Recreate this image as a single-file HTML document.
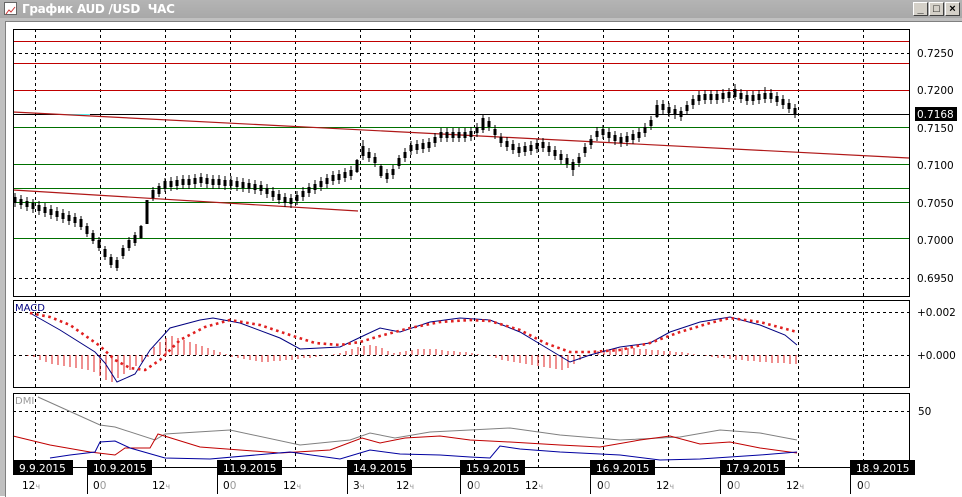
<!DOCTYPE html>
<html><head><meta charset="utf-8"><style>
html,body{margin:0;padding:0;width:962px;height:496px;overflow:hidden;background:#fff;font-family:"Liberation Sans","DejaVu Sans",sans-serif}
#tb{position:absolute;left:0;top:0;width:962px;height:18px;background:linear-gradient(#b4b4b4,#a8a8a8);}
#tt{position:absolute;left:22px;top:2px;color:#fff;font-weight:bold;font-size:12px;font-family:"DejaVu Sans",sans-serif;letter-spacing:-0.3px}
#ic{position:absolute;left:4px;top:2px;width:13px;height:13px;background:#fff;border:1px solid #666;box-sizing:border-box}
.bt{position:absolute;top:2px;width:15px;height:14px;background:#d4d0c8;border:1px solid;border-color:#fff #404040 #404040 #fff;box-sizing:border-box;font-size:11px;line-height:12px;text-align:center;color:#000;font-weight:bold}
#fr{position:absolute;left:0;top:18px;width:962px;height:478px;background:#c0c0c0}
#cl{position:absolute;left:5px;top:21px;width:957px;height:475px;background:#fff;border-left:1px solid #808080;border-top:1px solid #808080}
#s{position:absolute;left:0;top:0}
</style></head><body>
<div id="fr"></div><div id="cl"></div>
<div id="tb"><div id="ic"><svg width="11" height="11"><polyline points="1,9 4,5 6,7 10,2" fill="none" stroke="#c33" stroke-width="1"/></svg></div><div id="tt">График AUD /USD&nbsp; ЧАС</div>
<div class="bt" style="left:913px">_</div><div class="bt" style="left:929px">□</div><div class="bt" style="left:945px">×</div></div>
<svg id="s" width="962" height="496" font-family="DejaVu Sans, Liberation Sans, sans-serif" font-size="10.5">
<g stroke="#000" stroke-dasharray="3,3" shape-rendering="crispEdges">
<path d="M35.5 29V296M100.5 29V296M165.5 29V296M230.5 29V296M295.5 29V296M360.5 29V296M410.5 29V296M474.5 29V296M538.5 29V296M603.5 29V296M668.5 29V296M733.5 29V296M798.5 29V296M863.5 29V296"/>
<path d="M35.5 300V387M100.5 300V387M165.5 300V387M230.5 300V387M295.5 300V387M360.5 300V387M410.5 300V387M474.5 300V387M538.5 300V387M603.5 300V387M668.5 300V387M733.5 300V387M798.5 300V387M863.5 300V387"/>
<path d="M35.5 393V467M100.5 393V467M165.5 393V467M230.5 393V467M295.5 393V467M360.5 393V467M410.5 393V467M474.5 393V467M538.5 393V467M603.5 393V467M668.5 393V467M733.5 393V467M798.5 393V467M863.5 393V467"/>
<path d="M13 53.5H909M13 278.5H909M13 312.5H909M13 355.5H909M13 411.5H909"/>
</g>
<g shape-rendering="crispEdges">
<path d="M13 41.5H909M13 63.5H909M13 90.5H909" stroke="#c00000"/>
<path d="M13 127.5H909M13 164.5H909M13 188.5H909M13 202.5H909M13 238.5H909" stroke="#007000"/>
<path d="M13 114.5H909" stroke="#000"/>
<path d="M60 114.5H90" stroke="#5ee"/>
</g>
<line x1="13" y1="112" x2="909" y2="158" stroke="#b01818" stroke-width="1.2"/>
<line x1="13" y1="190" x2="358" y2="211" stroke="#b01818" stroke-width="1.2"/>
<path stroke="#000" stroke-width="1" fill="none" shape-rendering="crispEdges" d="M15 193V207M21 195V209M27 197V211M33 199V213M39 201V215M45 203V217M51 205V219M57 207V221M63 209V223M69 211V225M75 213V227M81 216V230M87 223V237M93 230V244M99 237V251M105 246V260M111 254V268M117 257V271M123 245V259M129 237V251M135 232V246M141 225V239M147 205V219M153 187V201M159 183V197M165 178V192M171 177V191M177 176V190M183 175V189M189 175V189M195 174V188M201 173V187M207 174V188M213 175V189M219 175V189M225 176V190M231 176V190M237 177V191M243 178V192M249 179V193M255 180V194M261 181V195M267 184V198M273 187V201M279 190V204M285 193V207M291 194V208M297 191V205M303 187V201M309 183V197M315 180V194M321 177V191M327 174V188M333 171V185M339 170V184M345 168V182M351 166V180M357 159V173M363 140V160M369 148V162M375 153V167M381 164V178M387 169V183M393 165V179M399 155V169M405 148V162M411 141V155M417 140V154M423 139V153M429 138V152M435 133V147M441 128V142M447 128V142M453 128V142M459 128V142M465 128V142M471 127V141M477 123V137M483 115V133M489 117V131M495 125V139M501 133V147M507 137V151M513 140V154M519 143V157M525 142V156M531 141V155M537 139V153M543 138V152M549 142V156M555 146V160M561 150V164M567 154V168M573 159V176M579 153V167M585 143V157M591 135V149M597 127V141M603 125V139M609 128V142M615 131V145M621 133V147M627 132V146M633 130V144M639 128V142M645 123V137M651 116V130M657 100V118M663 100V114M669 103V117M675 105V119M681 107V121M687 101V115M693 95V109M699 91V105M705 90V104M711 90V104M717 90V104M723 89V103M729 88V102M735 84V100M741 89V103M747 91V105M753 91V105M759 90V104M765 87V103M771 89V103M777 92V106M783 95V109M789 99V113M795 104V118"/>
<path stroke="#000" stroke-width="3" fill="none" d="M15 197V203M21 199V205M27 201V207M33 203V209M39 205V211M45 207V213M51 209V215M57 211V217M63 213V219M69 215V221M75 217V223M81 219V227M87 226V234M93 233V241M99 240V248M105 249V257M111 257V265M117 260V268M123 248V256M129 240V248M135 235V243M141 226V238M147 200V224M153 190V198M159 186V194M165 181V189M171 181V187M177 180V186M183 179V185M189 179V185M195 178V184M201 177V183M207 178V184M213 179V185M219 179V185M225 180V186M231 180V186M237 181V187M243 182V188M249 183V189M255 184V190M261 185V191M267 188V194M273 191V197M279 194V200M285 197V203M291 198V204M297 195V201M303 191V197M309 187V193M315 184V190M321 181V187M327 178V184M333 175V181M339 174V180M345 172V178M351 170V176M357 160V172M363 146V156M369 152V158M375 157V163M381 166V176M387 173V179M393 169V175M399 158V166M405 152V158M411 145V151M417 144V150M423 143V149M429 142V148M435 137V143M441 132V138M447 132V138M453 132V138M459 132V138M465 132V138M471 131V137M477 127V133M483 118V130M489 121V127M495 129V135M501 137V143M507 141V147M513 144V150M519 147V153M525 146V152M531 145V151M537 143V149M543 142V148M549 146V152M555 150V156M561 154V160M567 158V164M573 162V170M579 157V163M585 147V153M591 139V145M597 131V137M603 129V135M609 132V138M615 135V141M621 137V143M627 136V142M633 134V140M639 132V138M645 127V133M651 120V126M657 105V117M663 104V110M669 107V113M675 109V115M681 111V117M687 105V111M693 99V105M699 95V101M705 94V100M711 94V100M717 94V100M723 93V99M729 92V98M735 89V97M741 93V99M747 95V101M753 95V101M759 94V100M765 93V99M771 93V99M777 96V102M783 99V105M789 103V109M795 108V114"/>
<path stroke="#e02020" stroke-width="1" fill="none" shape-rendering="crispEdges" d="M28 355V356M34 355V357M40 355V360M46 355V362M52 355V364M58 355V365M64 355V366M70 355V367M76 355V368M82 355V369M88 355V370M94 355V372M100 355V376M106 355V380M112 355V382M118 355V378M124 355V374M130 355V370M136 355V366M142 355V362M148 355V357M154 355V347M160 355V342M166 355V338M172 355V336M178 355V338M184 355V340M190 355V342M196 355V344M202 355V346M208 355V348M214 355V350M220 355V352M226 355V354M232 355V357M238 355V358M244 355V359M250 355V360M256 355V361M262 355V362M268 355V362M274 355V361M280 355V361M286 355V360M292 355V360M298 355V359M304 355V358M310 355V358M316 355V357M322 355V356M328 355V355M334 355V354M340 355V353M346 355V351M352 355V349M358 355V347M364 355V346M370 355V345M376 355V346M382 355V348M388 355V351M394 355V353M400 355V352M406 355V351M412 355V350M418 355V349M424 355V349M430 355V349M436 355V349M442 355V350M448 355V351M454 355V351M460 355V352M466 355V352M472 355V353M478 355V354M484 355V355M490 355V356M496 355V358M502 355V360M508 355V361M514 355V362M520 355V363M526 355V364M532 355V365M538 355V366M544 355V367M550 355V368M556 355V369M562 355V370M568 355V368M574 355V364M580 355V360M586 355V357M592 355V354M598 355V351M604 355V350M610 355V349M616 355V348M622 355V348M628 355V348M634 355V348M640 355V349M646 355V349M652 355V350M658 355V350M664 355V351M670 355V351M676 355V352M682 355V352M688 355V353M694 355V354M700 355V355M706 355V356M712 355V357M718 355V358M724 355V358M730 355V359M736 355V360M742 355V360M748 355V361M754 355V361M760 355V362M766 355V362M772 355V363M778 355V363M784 355V363M790 355V364M796 355V364"/>
<polyline points="30,313 60,330 95,352 105,363 117,382 135,374 150,350 170,328 200,320 213,318 240,323 280,338 300,349 320,348 340,347 365,335 380,328 400,332 430,322 460,318 490,320 520,332 545,347 570,362 590,355 620,347 650,343 670,332 700,322 730,317 760,325 785,335 797,345" fill="none" stroke="#000080"/>
<polyline points="30,313 50,317 70,325 100,346 115,360 130,368 145,370 160,360 180,340 205,327 230,320 260,325 290,335 315,343 340,345 360,342 380,336 410,328 440,322 470,320 490,321 520,330 545,343 570,352 590,352 620,350 650,343 680,332 710,323 730,318 760,322 797,332" fill="none" stroke="#e02020" stroke-width="2.6" stroke-dasharray="2.6,3.6"/>
<text x="15" y="311" fill="#000080" font-size="10">MACD</text>
<polyline points="38,397 100,425 115,427 155,440 165,434 230,430 300,445 350,440 370,433 395,438 430,432 470,430 510,428 560,435 620,440 680,437 720,430 760,433 797,440" fill="none" stroke="#808080"/>
<polyline points="13,436 50,445 90,452 115,455 125,448 150,448 158,434 200,447 280,453 330,450 362,438 380,443 405,438 440,436 470,440 510,442 560,445 600,447 640,440 670,436 700,444 730,442 760,448 797,453" fill="none" stroke="#c00000"/>
<polyline points="50,458 70,455 95,452 100,442 115,441 130,448 165,458 210,459 290,452 340,459 370,450 400,454 440,455 470,457 490,458 500,446 520,449 560,452 620,455 660,460 700,459 760,455 797,452" fill="none" stroke="#0000a0"/>
<text x="15" y="404" fill="#999" font-size="10">DMI</text>
<g fill="none" stroke="#000" shape-rendering="crispEdges">
<rect x="13.5" y="29.5" width="896" height="267"/>
<rect x="13.5" y="300.5" width="896" height="87"/>
<rect x="13.5" y="393.5" width="896" height="74"/>
</g>
<text x="917" y="57">0.7250</text><text x="917" y="94">0.7200</text><text x="917" y="132">0.7150</text><text x="917" y="169">0.7100</text><text x="917" y="207">0.7050</text><text x="917" y="244">0.7000</text><text x="917" y="282">0.6950</text>
<rect x="915" y="107" width="42" height="14" fill="#000"/><text x="917" y="118" fill="#fff">0.7168</text>
<text x="917" y="316">+0.002</text><text x="917" y="359">+0.000</text><text x="918" y="415">50</text>
<g fill="#000"><rect x="13" y="460" width="60" height="15"/><rect x="87" y="460" width="65" height="15"/><rect x="217" y="460" width="65" height="15"/><rect x="347" y="460" width="65" height="15"/><rect x="460" y="460" width="65" height="15"/><rect x="590" y="460" width="65" height="15"/><rect x="720" y="460" width="65" height="15"/><rect x="850" y="460" width="65" height="15"/></g>
<g fill="#fff"><text x="19" y="472">9.9.2015</text><text x="93" y="472">10.9.2015</text><text x="223" y="472">11.9.2015</text><text x="353" y="472">14.9.2015</text><text x="466" y="472">15.9.2015</text><text x="596" y="472">16.9.2015</text><text x="726" y="472">17.9.2015</text><text x="856" y="472">18.9.2015</text></g>
<path d="M87.5 475V494M217.5 475V494M347.5 475V494M460.5 475V494M590.5 475V494M720.5 475V494M850.5 475V494" stroke="#000" shape-rendering="crispEdges"/>
<g>
<text x="22" y="489">12<tspan fill="#999" font-size="8">ч</tspan></text>
<text x="93" y="489">0<tspan fill="#999">0</tspan></text>
<text x="152" y="489">12<tspan fill="#999" font-size="8">ч</tspan></text>
<text x="223" y="489">0<tspan fill="#999">0</tspan></text>
<text x="283" y="489">12<tspan fill="#999" font-size="8">ч</tspan></text>
<text x="353" y="489">3<tspan fill="#999" font-size="8">ч</tspan></text>
<text x="396" y="489">12<tspan fill="#999" font-size="8">ч</tspan></text>
<text x="467" y="489">0<tspan fill="#999">0</tspan></text>
<text x="525" y="489">12<tspan fill="#999" font-size="8">ч</tspan></text>
<text x="597" y="489">0<tspan fill="#999">0</tspan></text>
<text x="656" y="489">12<tspan fill="#999" font-size="8">ч</tspan></text>
<text x="727" y="489">0<tspan fill="#999">0</tspan></text>
<text x="786" y="489">12<tspan fill="#999" font-size="8">ч</tspan></text>
<text x="857" y="489">0<tspan fill="#999">0</tspan></text>
</g>
</svg>
</body></html>
